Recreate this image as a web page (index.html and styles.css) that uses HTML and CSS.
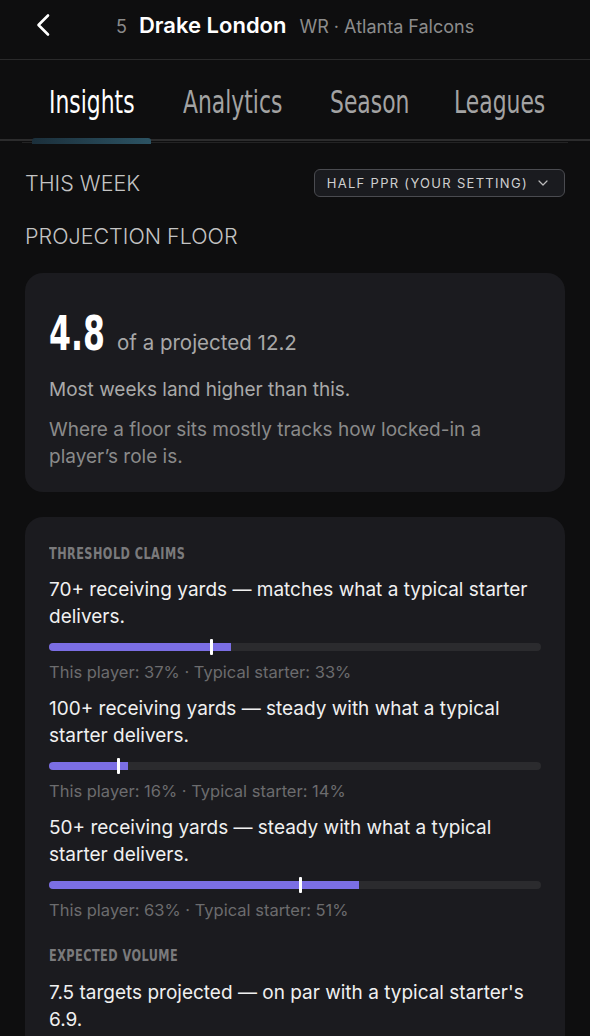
FILE: index.html
```html
<!DOCTYPE html>
<html lang="en">
<head>
    <meta charset="UTF-8">
    <title>Drake London - Insights</title>
    <meta name="viewport" content="width=device-width">
    <link rel="stylesheet" href="styles.css">
</head>
<body>
    <header class="top-bar">
        <button class="back-btn" aria-label="Back">
            <svg width="16" height="24" viewBox="0 0 16 24"><path d="M13 2.5 L3.5 12 L13 21.5" fill="none" stroke="#fff" stroke-width="2.6" stroke-linecap="round" stroke-linejoin="round"/></svg>
        </button>
        <div class="player-title">
            <span class="player-rank">5</span>
            <span class="player-name">Drake London</span>
            <span class="player-meta">WR · Atlanta Falcons</span>
        </div>
    </header>

    <nav class="tabs">
        <a class="tab active" href="#"><span class="narrow">Insights</span></a>
        <a class="tab" href="#"><span class="narrow">Analytics</span></a>
        <a class="tab" href="#"><span class="narrow">Season</span></a>
        <a class="tab" href="#"><span class="narrow">Leagues</span></a>
    </nav>

    <main class="content">
        <div class="week-row">
            <h2 class="section-title">THIS WEEK</h2>
            <button class="scoring-select">
                HALF PPR (YOUR SETTING)
                <svg width="10" height="6" viewBox="0 0 10 6"><path d="M1 1 L5 5 L9 1" fill="none" stroke="#bbb" stroke-width="1.2" stroke-linecap="round" stroke-linejoin="round"/></svg>
            </button>
        </div>

        <h2 class="section-title floor-title">PROJECTION FLOOR</h2>

        <section class="card floor-card">
            <div class="floor-value">
                <span class="floor-big"><span class="narrow">4.8</span></span>
                <span class="floor-of">of a projected 12.2</span>
            </div>
            <p class="floor-note">Most weeks land higher than this.</p>
            <p class="floor-sub">Where a floor sits mostly tracks how locked-in a player’s role is.</p>
        </section>

        <section class="card claims-card">
            <h3 class="card-label"><span class="narrow">THRESHOLD CLAIMS</span></h3>

            <div class="claim">
                <p class="claim-text">70+ receiving yards — matches what a typical starter delivers.</p>
                <div class="bar">
                    <div class="bar-fill" style="width: 37%"></div>
                    <div class="bar-mark" style="left: 33%"></div>
                </div>
                <p class="claim-caption">This player: 37% · Typical starter: 33%</p>
            </div>

            <div class="claim">
                <p class="claim-text">100+ receiving yards — steady with what a typical starter delivers.</p>
                <div class="bar">
                    <div class="bar-fill" style="width: 16%"></div>
                    <div class="bar-mark" style="left: 14%"></div>
                </div>
                <p class="claim-caption">This player: 16% · Typical starter: 14%</p>
            </div>

            <div class="claim">
                <p class="claim-text">50+ receiving yards — steady with what a typical starter delivers.</p>
                <div class="bar">
                    <div class="bar-fill" style="width: 63%"></div>
                    <div class="bar-mark" style="left: 51%"></div>
                </div>
                <p class="claim-caption">This player: 63% · Typical starter: 51%</p>
            </div>

            <h3 class="card-label volume-label"><span class="narrow">EXPECTED VOLUME</span></h3>
            <p class="claim-text">7.5 targets projected — on par with a typical starter's 6.9.</p>
        </section>
    </main>
</body>
</html>
```

FILE: styles.css
```css
*,
*::after,
*::before{
    padding: 0;
    margin: 0;
    box-sizing: border-box;
}
html{
    font: normal 18px/1.5 "Inter", "Noto Sans", sans-serif;
    background-color: #0e0e0f;
    color: #eee;
}
body{
    width: 590px;
    overflow: hidden;
}

/* condensed display text (no narrow face installed, so squeeze it) */
.narrow{
    display: inline-block;
    font-family: "DejaVu Sans Condensed", "DejaVu Sans", sans-serif;
    font-stretch: condensed;
    white-space: nowrap;
    transform: scaleX(0.76);
    transform-origin: left center;
}

/* header */
.top-bar{
    height: 60px;
    display: flex;
    align-items: center;
    border-bottom: 1px solid #2a2a2b;
}
.back-btn{
    background: none;
    border: none;
    padding: 0;
    margin-left: 35px;
    margin-top: -10px;
    width: 20px;
    height: 24px;
    display: flex;
    align-items: center;
    cursor: pointer;
}
.player-title{
    margin-left: 61px;
    margin-top: -9px;
    display: flex;
    align-items: baseline;
}
.player-rank{
    font-size: 18px;
    color: #8a8a8a;
    margin-right: 12px;
}
.player-name{
    font-size: 22px;
    font-weight: 600;
    color: #fff;
    margin-right: 13px;
}
.player-meta{
    font-size: 18px;
    color: #8c8c8c;
}

/* tabs */
.tabs{
    display: grid;
    grid-template-columns: 85px 98px 75px 87px;
    column-gap: 49px;
    padding-left: 49px;
    height: 81px;
    border-bottom: 2px solid #2c2c2d;
}
.tab{
    position: relative;
    font-size: 32px;
    line-height: 81px;
    color: #a3a3a3;
    text-decoration: none;
}
.tab .narrow{
    margin-top: 2px;
}
.tab.active{
    color: #fff;
}
.tab.active::after{
    content: "";
    position: absolute;
    left: -17px;
    right: -17px;
    bottom: -1px;
    height: 6px;
    border-radius: 3px 3px 0 0;
    background: linear-gradient(90deg, #1b2f3b, #2c5363);
}

/* content */
.content{
    margin: 1px 22px 0;
    border-top: 1px solid #232324;
    padding: 0 3px;
}
.week-row{
    display: flex;
    justify-content: space-between;
    align-items: center;
    margin-top: 26px;
}
.section-title{
    font-size: 21.5px;
    font-weight: 300;
    color: #c4c4c4;
    line-height: 28px;
}
.scoring-select{
    display: flex;
    align-items: center;
    gap: 10px;
    height: 28px;
    padding: 0 16px 0 12px;
    background-color: #1a1b1f;
    border: 1px solid #4a4b50;
    border-radius: 6px;
    font-family: "Inter", sans-serif;
    font-size: 13px;
    letter-spacing: 1.3px;
    color: #cfcfcf;
}
.floor-title{
    margin-top: 25px;
}
.card{
    background-color: #1b1b1f;
    border-radius: 18px;
    padding: 0 24px;
}
.floor-card{
    margin-top: 23px;
    padding-top: 36px;
    padding-bottom: 22px;
}
.floor-value{
    display: flex;
    align-items: baseline;
    gap: 13px;
}
.floor-big{
    width: 55px;
    font-weight: 700;
    font-size: 48px;
    line-height: 48px;
    color: #fff;
}
.floor-big .narrow{
    transform: scaleX(0.73);
}
.floor-of{
    font-size: 20.5px;
    color: #a8a8a8;
}
.floor-note{
    margin-top: 17px;
    font-size: 19px;
    line-height: 27px;
    color: #a9a9a9;
}
.floor-sub{
    margin-top: 13px;
    font-size: 19px;
    line-height: 27px;
    color: #8a8a8a;
}

.claims-card{
    margin-top: 25px;
    padding-top: 26px;
    padding-bottom: 30px;
}
.card-label{
    font-weight: 700;
    font-size: 16.5px;
    line-height: 20px;
    letter-spacing: 0.6px;
    color: #7a7a7c;
}
.claim{
    margin-top: 12px;
}
.claim + .claim{
    margin-top: 13px;
}
.claim-text{
    font-size: 19px;
    line-height: 27px;
    color: #f0f0f0;
}
.bar{
    position: relative;
    height: 8px;
    margin-top: 13px;
    border-radius: 4px;
    background-color: #2b2b2e;
}
.bar-fill{
    height: 100%;
    border-radius: 4px 0 0 4px;
    background-color: #7b6ee4;
}
.bar-mark{
    position: absolute;
    top: -4px;
    width: 3px;
    height: 16px;
    margin-left: -1px;
    border-radius: 1px;
    background-color: #fff;
}
.claim-caption{
    margin-top: 11px;
    font-size: 16.5px;
    line-height: 20px;
    color: #6c6c6e;
}
.volume-label{
    margin-top: 25px;
}
.volume-label + .claim-text{
    margin-top: 13px;
}
```
